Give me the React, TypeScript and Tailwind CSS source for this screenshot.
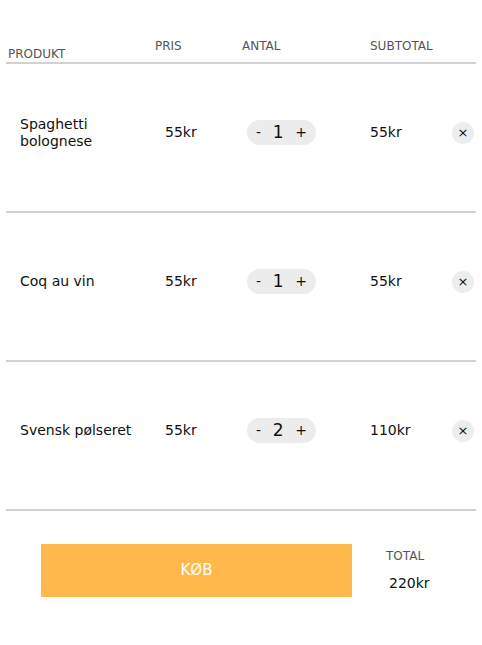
const items = [
  { name: 'Spaghetti bolognese', price: 55, qty: 1 },
  { name: 'Coq au vin', price: 55, qty: 1 },
  { name: 'Svensk pølseret', price: 55, qty: 2 },
];

function Row({ name, price, qty }: { name: string; price: number; qty: number }) {
  return (
    <div className="flex h-[149px] items-center border-b-2 border-[#d2d2d2] pb-[10px] text-[14px] text-[#111]">
      <div className="w-[144px] pl-[14px] leading-[17px]">
        <span className="block w-[125px]">{name}</span>
      </div>
      <div className="w-[82px] pl-[15px]">{price}kr</div>
      <div className="w-[138px] pl-[15px]">
        <div className="flex h-[25px] w-[69px] items-center justify-between rounded-full bg-[#ececec] px-[9px]">
          <span className="text-[14px]">-</span>
          <span className="text-[17px]">{qty}</span>
          <span className="text-[14px]">+</span>
        </div>
      </div>
      <div className="w-[82px]">{price * qty}kr</div>
      <button className="flex h-[22px] w-[22px] items-center justify-center rounded-full bg-[#ededed] text-[13px] leading-none">
        ×
      </button>
    </div>
  );
}

export default function App() {
  const total = items.reduce((s, i) => s + i.price * i.qty, 0);
  return (
    <div className="h-[645px] w-[482px] bg-white font-['DejaVu_Sans',sans-serif]">
      <div className="mx-[6px] w-[470px] pt-[37px]">
        <div className="flex h-[27px] border-b-2 border-[#d2d2d2] text-[12px] text-[#555]">
          <div className="w-[149px] pl-[2px] pt-[8px]">PRODUKT</div>
          <div className="w-[87px]">PRIS</div>
          <div className="w-[128px]">ANTAL</div>
          <div>SUBTOTAL</div>
        </div>
        {items.map((i) => (
          <Row key={i.name} {...i} />
        ))}
        <div className="flex pt-[33px]">
          <button className="ml-[35px] flex h-[53px] w-[311px] items-center justify-center bg-[#ffb84c] text-[15px] text-white">
            KØB
          </button>
          <div className="ml-[34px] pt-[3px]">
            <div className="text-[12px] text-[#555]">TOTAL</div>
            <div className="mt-[8px] pl-[3px] text-[14px] text-[#111]">{total}kr</div>
          </div>
        </div>
      </div>
    </div>
  );
}
